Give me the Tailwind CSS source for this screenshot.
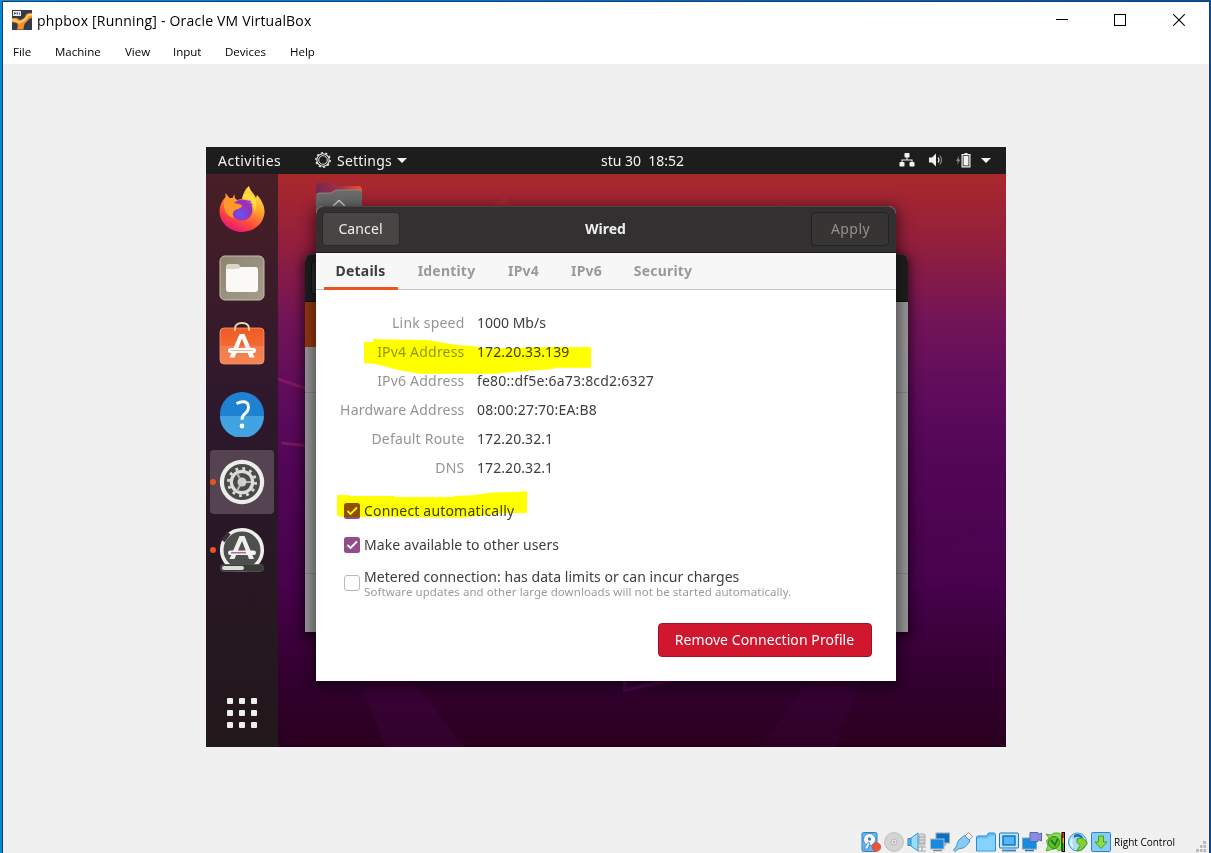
<!DOCTYPE html>
<html lang="en">
<head>
<meta charset="utf-8">
<title>phpbox [Running] - Oracle VM VirtualBox</title>
<script src="https://cdn.jsdelivr.net/npm/@tailwindcss/browser@4"></script>
</head>
<body class="h-[853px] w-[1211px] overflow-hidden bg-linear-to-r from-[#0788d8] to-[#0350ae] pt-px pr-px pl-[2px] font-['Open_Sans','Noto_Sans',sans-serif] text-black">
<div class="flex h-[852px] flex-col border-x border-t border-[#173f62] bg-[#f0f0f0]">

  <!-- Title bar -->
  <header class="flex h-[36px] shrink-0 items-center bg-white pl-[9px]">
    <svg class="h-5 w-5" viewBox="0 0 20 20">
      <rect width="20" height="20" fill="#343b46"/>
      <path d="M0 8.500c3-.8 6-.5 7.500 1.500 3-.5 5.500-2 6-4.500.5-2 3-2.500 6.500-2.500v5c-3 .3-3.500 2-5 3.500-2.500 2-3 3-3.500 8H5c.5-3 1.500-4.500 0-6-1.500-1.200-3.500-1-5-1z" fill="#f2902c"/>
      <path d="M0 9.500c3-.8 5 0 6.500 2 3.500-1 6.500-2.500 8-5.500 1-1.800 3-2 5.500-2v1.500c-3 0-3.500 1-4.500 2.500-2 3-4.500 4-8 5.500C5 12 3 11 0 11z" fill="#ffca78"/>
      <path d="M1 1h8v5H1z" fill="#e9edf0"/><path d="M2.500 4.500V2.500L4 4V2.500M5.500 2.500v2M7.500 4.500v-2" fill="none" stroke="#333" stroke-width=".8"/>
    </svg>
    <h1 class="mt-px ml-[5px] w-[700px] text-[14px] leading-5 tracking-[0.2px]">phpbox [Running] - Oracle VM VirtualBox</h1>
    <div class="ml-auto flex items-center gap-[46px] pr-[24px]">
      <svg class="h-3 w-3" viewBox="0 0 12 12" shape-rendering="crispEdges"><path d="M0 5.500h12" stroke="#000"/></svg>
      <svg class="mr-px h-3 w-3" viewBox="0 0 12 12" shape-rendering="crispEdges"><rect x=".5" y=".5" width="11" height="11" fill="none" stroke="#000"/></svg>
      <svg class="h-3 w-3" viewBox="0 0 12 12"><path d="M.3.3l11.400 11.400M11.700.3L.3 11.700" stroke="#000" stroke-width="1.100"/></svg>
    </div>
  </header>

  <!-- Menu bar -->
  <nav class="flex h-[26px] shrink-0 items-center bg-white pt-[2px] pl-[10px] text-[11.500px] leading-4">
    <span class="w-[42px]">File</span>
    <span class="w-[70px]">Machine</span>
    <span class="w-[48px]">View</span>
    <span class="w-[52px]">Input</span>
    <span class="w-[65px]">Devices</span>
    <span>Help</span>
  </nav>

  <!-- Guest display -->
  <main class="flex flex-1 justify-center pt-[83px] font-['Noto_Sans','Open_Sans',sans-serif]">
    <div class="relative mr-px flex h-[600px] w-[800px] flex-col overflow-hidden bg-[#2c0025] text-[14px]">

      <!-- Top panel -->
      <div class="flex h-[27px] shrink-0 items-center bg-[#1d1d1d] text-[#f2f2f2]">
        <span class="ml-[12px] w-[97px] pl-[0.5px] tracking-[0.5px]">Activities</span>
        <svg class="mb-px h-4 w-4" viewBox="0 0 16 16" fill="none" stroke="#f0f0f0">
          <circle cx="8" cy="8" r="6.200" stroke-width="1.100"/><circle cx="8" cy="8" r="4.300" stroke-width=".9"/>
          <circle cx="8" cy="8" r="7.200" stroke-width="1.400" stroke-dasharray="2 2.524"/>
        </svg>
        <span class="ml-[6px] w-[60px] pl-[0.5px] tracking-[0.2px]">Settings</span>
        <svg class="h-[5px] w-[10px]" viewBox="0 0 10 5"><path d="M0 0h10L5 5z" fill="#f2f2f2"/></svg>
        <span class="mb-px ml-[194px] w-[90px] pl-[0.5px] whitespace-pre">stu 30  18:52</span>
        <div class="ml-auto flex items-center pr-[15px]">
          <svg class="mr-px mb-px h-[14px] w-[16px]" viewBox="0 0 16 14" fill="#f2f2f2"><rect x="5.500" width="5" height="4.500" rx=".8"/><rect x=".5" y="9" width="5" height="4.500" rx=".8"/><rect x="10.500" y="9" width="5" height="4.500" rx=".8"/><path d="M7.500 4h1v2.500h5V9h-1V7.500h-9V9h-1V6.500h5z"/></svg>
          <svg class="mb-px ml-[13px] h-[14px] w-[15px]" viewBox="0 0 15 14"><path d="M0 4.500h3L7 .5v13L3 9.500H0z" fill="#f2f2f2"/><path d="M9 4.500q2 2.500 0 5" fill="none" stroke="#f2f2f2" stroke-width="1.200"/><path d="M10.800 2.500q3.500 4.500 0 9" fill="none" stroke="#888" stroke-width="1.200"/></svg>
          <svg class="mb-px ml-[12px] h-[15px] w-[15px]" viewBox="0 0 15 15"><path d="M3 3L0 8h2l-1 4 3.500-5.500H2.500z" fill="#8a8a8a"/><path d="M8.500 0h3v1H14.500v13.500H5.500V1h3zM6.700 2.200v11h6.600v-11z" fill="#f2f2f2" fill-rule="evenodd"/><path d="M7.500 3h5v9.500h-5z" fill="#f2f2f2"/></svg>
          <svg class="ml-[10px] h-[5px] w-[10px]" viewBox="0 0 10 5"><path d="M0 0h10L5 5z" fill="#f2f2f2"/></svg>
        </div>
      </div>

      <!-- Desktop -->
      <div class="flex h-[573px]">
        <svg class="absolute top-[27px] left-0 h-[573px] w-[800px]" viewBox="0 0 800 573">
          <defs><linearGradient id="wall" x1="0" y1="0" x2="0" y2="1">
            <stop offset="0" stop-color="#aa282b"/><stop offset=".12" stop-color="#931f3d"/><stop offset=".26" stop-color="#711458"/><stop offset=".4" stop-color="#5d0b5b"/><stop offset=".5" stop-color="#530657"/><stop offset=".72" stop-color="#46024a"/><stop offset=".88" stop-color="#330030"/><stop offset="1" stop-color="#2a001f"/>
          </linearGradient></defs>
          <rect width="800" height="573" fill="url(#wall)"/>
          <path d="M285 32l14-9 8 9zM564 32l12-3 10 3z" fill="#c13035" opacity=".35"/>
          <path d="M35 193l70 23M75 269l30 3" fill="none" stroke="#9b2868" stroke-width="3" opacity=".5"/>
          <path d="M152 505l28 68h78l-52-68z" fill="#4b0650" opacity=".25"/>
          <path d="M419 505v11l60-13" fill="none" stroke="#59095a" stroke-width="4" opacity=".7"/>
          <path d="M605 505l-52 68h76l27-68z" fill="#5c0a62" opacity=".12"/>
          <path d="M690 420q20-30 45-45l65-30v60z" fill="#5c0a62" opacity=".12"/>
        </svg>

        <!-- Dock -->
        <aside class="relative flex w-[72px] flex-col bg-linear-to-b from-[#481f25] via-[#2e182c] via-40% to-[#22171b] pt-px">
          <div class="flex h-[68px] items-center justify-center">
            <svg class="h-[48px] w-[48px]" viewBox="0 0 48 48">
              <defs><linearGradient id="ff" x1=".8" y1="0" x2=".3" y2="1"><stop offset="0" stop-color="#fff44f"/><stop offset=".4" stop-color="#ffa630"/><stop offset=".7" stop-color="#ff5038"/><stop offset="1" stop-color="#e5127e"/></linearGradient>
              <radialGradient id="fg" cx=".45" cy=".7"><stop offset="0" stop-color="#6a52f4"/><stop offset="1" stop-color="#9930b8"/></radialGradient></defs>
              <path d="M31 1c1 5 5 7 7 12l1-3c5 5 8 12 7.500 18C45 40 35 47 24 47 11 47 1.500 37 1.500 26c0-5 2-10 6-14V8l4 5 3 0 2-4c0 3 0 5 3 6 2-1 4-1 5-1 0-5 3-10 6.500-13z" fill="url(#ff)"/>
              <circle cx="24" cy="25" r="10.500" fill="url(#fg)"/>
              <path d="M7 14c4-1 7 1 9 4 3 1 8 1 8 3-1 3-6 3-8 5-2 2-1 5 0 7-6-1-13-9-9-19z" fill="#ff9a2a"/>
              <path d="M24 14c6-1 13 3 12 13 4-5 4-15-6-19-4 1-6 3-6 6z" fill="#ffdf40"/>
              <path d="M27 15l7 1-2 1 3 3h-4z" fill="#a33ad0"/>
            </svg>
          </div>
          <div class="flex h-[68px] items-center justify-center">
            <svg class="mt-px h-[46px] w-[46px]" viewBox="0 0 46 46">
              <defs><linearGradient id="fl" x1="0" y1="0" x2="1" y2="1"><stop offset="0" stop-color="#8e8570"/><stop offset="1" stop-color="#a39d8b"/></linearGradient></defs>
              <rect x="1" y="1" width="44" height="44" rx="5" fill="url(#fl)" stroke="#c4beac" stroke-width="1"/>
              <path d="M7 12q0-3 3-3h8q2 0 3 2l2 3H7z" fill="#d9d5ca"/>
              <path d="M7 14h10q3 0 5-2h14q3 0 3 3v19q0 3-3 3H10q-3 0-3-3z" fill="#faf9f7"/>
            </svg>
          </div>
          <div class="flex h-[68px] items-center justify-center pb-[2px]">
            <svg class="h-[48px] w-[46px]" viewBox="0 0 46 48">
              <defs><linearGradient id="sw" x1="0" y1="0" x2="0" y2="1"><stop offset="0" stop-color="#f15a22"/><stop offset=".5" stop-color="#f26a35"/><stop offset=".5" stop-color="#f47d4d"/><stop offset="1" stop-color="#f58350"/></linearGradient></defs>
              <rect x="1" y="8" width="44" height="36" rx="4" fill="url(#sw)" stroke="#f99b73" stroke-width=".8"/>
              <path d="M16 11V9q0-6 7-6t7 6v2" fill="none" stroke="#f5d9a5" stroke-width="1.800"/>
              <path d="M20.500 14h5l10 23.500h-5L23 18.500l-7.500 19h-5z" fill="#fff"/>
              <rect x="9" y="28" width="28" height="5" rx="2.500" fill="#fff"/><path d="M12 30.500h22" stroke="#f7b295"/>
            </svg>
          </div>
          <div class="mt-px flex h-[68px] items-center justify-center">
            <svg class="h-[46px] w-[46px]" viewBox="0 0 46 46">
              <circle cx="23" cy="23" r="22" fill="#1e82d2"/><path d="M1 25a22 22 0 0 0 44 0z" fill="#41a3e2"/>
              <path d="M17.500 12.500q4-2 7-1.800 5 .3 5 5.500 0 3.500-3.500 6.500-3 2.500-3 6" fill="none" stroke="#fff" stroke-width="2.900"/>
              <circle cx="23" cy="35" r="2.400" fill="#fff"/>
            </svg>
          </div>
          <div class="relative flex h-[68px] items-center justify-center">
            <div class="flex h-[64px] w-[64px] items-center justify-center rounded-[4px] bg-[#554352]">
              <svg class="h-[46px] w-[46px]" viewBox="0 0 46 46">
                <circle cx="23" cy="23" r="22.200" fill="#ededeb"/><circle cx="23" cy="23" r="18" fill="#4b4b4a"/>
                <circle cx="23" cy="23" r="13.600" fill="none" stroke="#deddda" stroke-width="2.800" stroke-dasharray="2.800 4.320"/>
                <circle cx="23" cy="23" r="10.700" fill="none" stroke="#deddda" stroke-width="3.200"/>
                <path d="M23 23h9M23 23l-5 8.500M23 23l-5-8.500" stroke="#b5b5b2" stroke-width="2.200"/>
                <circle cx="23" cy="23" r="4.500" fill="#d0d0cd"/>
              </svg>
            </div>
            <span class="absolute top-[31px] left-[4px] h-[6px] w-[6px] rounded-full bg-[#e95420]"></span>
          </div>
          <div class="relative flex h-[68px] items-center justify-center">
            <svg class="h-[46px] w-[46px]" viewBox="0 0 46 46">
              <circle cx="23" cy="23" r="20.300" fill="#4f4f4f" stroke="#eeeeec" stroke-width="3.600"/>
              <path d="M4 14l6-8" stroke="#3a3038" stroke-width="4"/>
              <path d="M20.500 9h5l9.500 23h-5L23 14l-7.500 18h-5z" fill="#efefee"/>
              <rect x="9" y="23.500" width="28" height="4.600" rx="2.300" fill="#f5f5f5"/><path d="M12 25.800h15" stroke="#924d8b" stroke-width="1.200"/>
              <rect x="1.500" y="37.500" width="43" height="7" rx="3" fill="#3c3c3b" stroke="#555" stroke-width=".8"/>
              <rect x="3" y="39" width="22" height="4" rx="2" fill="#dcdcda"/>
            </svg>
            <span class="absolute top-[31px] left-[4px] h-[6px] w-[6px] rounded-full bg-[#e95420]"></span>
          </div>
          <div class="mt-auto flex h-[68px] items-center justify-center">
            <svg class="h-[30px] w-[30px]" viewBox="0 0 30 30" fill="#eeeeec">
              <rect width="6" height="6" rx="1"/><rect x="12" width="6" height="6" rx="1"/><rect x="24" width="6" height="6" rx="1"/>
              <rect y="12" width="6" height="6" rx="1"/><rect x="12" y="12" width="6" height="6" rx="1"/><rect x="24" y="12" width="6" height="6" rx="1"/>
              <rect y="24" width="6" height="6" rx="1"/><rect x="12" y="24" width="6" height="6" rx="1"/><rect x="24" y="24" width="6" height="6" rx="1"/>
            </svg>
          </div>
        </aside>
      </div>

      <!-- Home folder on the desktop -->
      <svg class="absolute top-[35px] left-[110px] h-[40px] w-[46px]" viewBox="0 0 46 40">
        <defs><linearGradient id="home"><stop offset="0" stop-color="#74264f"/><stop offset=".55" stop-color="#a5324a"/><stop offset="1" stop-color="#e9552a"/></linearGradient></defs>
        <path d="M0 5q0-4 4-4h13l4 3h21q4 0 4 4v20H0z" fill="url(#home)"/>
        <path d="M0 14q0-3 3-3h12l5-3h23q3 0 3 3v29H0z" fill="#6b6b6b"/><path d="M1 12.500q1-1.500 3-1.500h11l5-3h23q2 0 3 2" fill="none" stroke="#949494" stroke-width=".8"/>
        <path d="M17 24l6-5.500 6 5.500" fill="none" stroke="#ddd" stroke-width="1.300"/>
      </svg>

      <!-- Settings window behind the dialog -->
      <div class="absolute top-[107px] left-[99px] flex h-[378px] w-[603px] flex-col overflow-hidden rounded-t-[7px] bg-[#989898] shadow-[0_3px_12px_3px_rgba(0,0,0,0.5)]">
        <div class="flex h-[48px] shrink-0 items-center border-t border-b border-t-[#343434] border-b-[#111] bg-[#1f1e1f] pl-[6px]"><div class="h-[34px] w-[40px] rounded-[4px] border border-[#111] bg-[#2a2929]"></div></div>
        <div class="h-[45px] w-[200px] bg-[#943710]"></div>
        <div class="h-[46px] border-b border-[#858585]"></div>
        <div class="h-[181px] border-b border-[#858585]"></div>
      </div>

      <!-- Wired connection dialog -->
      <section class="absolute top-[59px] left-[110px] flex h-[475px] w-[580px] flex-col rounded-t-[8px] bg-white text-[#3d3d3d] shadow-[0_3px_14px_3px_rgba(0,0,0,0.5)]">
        <div class="flex h-[47px] shrink-0 items-center justify-between rounded-t-[8px] border-t border-b border-t-[#474646] border-b-[#1d1c1c] bg-[#323030] px-[6px] pb-[2px] text-[#eeeeec]">
          <button class="h-[34px] w-[78px] rounded-[4px] border border-[#2a2828] bg-[#484645] pb-px tracking-[0.1px]">Cancel</button>
          <h2 class="font-bold">Wired</h2>
          <button class="h-[34px] w-[78px] rounded-[4px] border border-[#232222] bg-[#373434] pb-px tracking-[0.4px] text-[#919190]">Apply</button>
        </div>
        <div class="flex h-[37px] shrink-0 gap-2 border-b border-[#c3c3c3] bg-[#f7f7f7] px-2 text-center leading-[36px] font-bold tracking-[0.2px] text-[#9a9a99]">
          <span class="h-[37px] w-[74px] border-b-3 border-[#e95420] text-[#3d3d3d]">Details</span>
          <span class="w-[82px]">Identity</span>
          <span class="w-[56px]">IPv4</span>
          <span class="w-[54px]">IPv6</span>
          <span class="w-[83px]">Security</span>
        </div>
        <dl class="grid grid-cols-[149px_1fr] gap-x-[12.500px] pt-[18px] leading-[29px] [&>dt]:text-right [&>dt]:tracking-[0.2px] [&>dt]:text-[#949493]">
          <dt>Link speed</dt><dd>1000 Mb/s</dd>
          <dt>IPv4 Address</dt><dd class="tracking-[0.08px]">172.20.33.139</dd>
          <dt>IPv6 Address</dt><dd class="tracking-[0.2px]">fe80::df5e:6a73:8cd2:6327</dd>
          <dt>Hardware Address</dt><dd class="tracking-[0.2px]">08:00:27:70:EA:B8</dd>
          <dt>Default Route</dt><dd class="tracking-[0.08px]">172.20.32.1</dd>
          <dt>DNS</dt><dd class="tracking-[0.08px]">172.20.32.1</dd>
        </dl>
        <div class="flex flex-col pt-[12px] pl-[28px]">
          <label class="flex h-[34px] items-center gap-[4.500px]"><svg class="h-4 w-4" viewBox="0 0 16 16"><rect width="16" height="16" rx="2.500" fill="#924d8b"/><path d="M3.500 8l3 3L13 4.500" fill="none" stroke="#fff" stroke-width="1.800"/></svg><span class="pb-[2px] tracking-[0.18px]">Connect automatically</span></label>
          <label class="flex h-[34px] items-center gap-[4.500px]"><svg class="h-4 w-4" viewBox="0 0 16 16"><rect width="16" height="16" rx="2.500" fill="#924d8b"/><path d="M3.500 8l3 3L13 4.500" fill="none" stroke="#fff" stroke-width="1.800"/></svg><span class="pb-[2px] tracking-[0.05px]">Make available to other users</span></label>
          <label class="flex h-[42px] items-center gap-[4.500px]"><span class="h-4 w-4 rounded-[3px] border border-[#b9b9b9] bg-white"></span><span class="flex flex-col pt-[2px]"><span class="leading-4 tracking-[0.05px]">Metered connection: has data limits or can incur charges</span><span class="text-[11.500px] leading-[14px] tracking-[0.07px] text-[#9a9a99]">Software updates and other large downloads will not be started automatically.</span></span></label>
        </div>
        <button class="mt-auto mr-6 mb-6 h-[34px] w-[214px] self-end rounded-[4px] border border-[#a01222] bg-[#d0172d] pb-[2px] tracking-[0.08px] text-white">Remove Connection Profile</button>
      </section>

      <!-- Marker strokes over the dialog -->
      <svg class="pointer-events-none absolute top-0 left-0 h-[600px] w-[800px] mix-blend-multiply" viewBox="0 0 800 600" fill="#ffff00">
        <path d="M158 195h9.300v-3l53.400 1 30 5 15 1 15 2.700 26.300-.7 30-1h48v20.700h-36l-2 1.300-43 3.300-16.700 1.400H214l-21.700-3.700-21.600-5.700-12.700-1.300z"/>
        <path d="M131 348h12v1h46v1h59v-1l17.700-.7 10-1.300 6.600-1 31-1.300 7.700-.7v22h-22l-28.300 3.300-15 1.400-73.700-.7h-46.300l-4.700-1.300z"/>
      </svg>
    </div>
  </main>

  <!-- Status bar -->
  <footer class="flex h-[21px] shrink-0 items-start justify-end">
    <div class="flex gap-[3px]">
      <svg class="h-5 w-5" viewBox="0 0 20 20"><rect x="1" y=".5" width="15" height="19" rx="1.500" fill="#69b5ef" stroke="#2a82c9"/><circle cx="8.500" cy="7.500" r="6" fill="#fff" stroke="#3c8fd1"/><circle cx="8.500" cy="7" r="1.800" fill="#3688c8"/><path d="M3 17l4-7 2 1-2 6z" fill="#dff0fc" stroke="#257bbc" stroke-width=".7"/><circle cx="15.500" cy="15" r="4.300" fill="#ef5431" stroke="#d94524" stroke-width=".7"/></svg>
      <svg class="h-5 w-5" viewBox="0 0 20 20"><circle cx="10" cy="10" r="9.400" fill="#d4d4d4" stroke="#bebebe"/><circle cx="10" cy="10" r="3" fill="#e2e2e2" stroke="#b8b8b8"/><circle cx="10" cy="10" r="1" fill="#aaa"/></svg>
      <svg class="h-5 w-5" viewBox="0 0 20 20"><rect x="12" y="2" width="6" height="11" rx="1" fill="#ddd" stroke="#aaa"/><path d="M12 5h6M12 8h6M12 11h6M10 15h9M15 15v4M11 19h8" stroke="#a0a0a0"/><path d="M1 6.500h3v7H1z" fill="#55baf2" stroke="#2787c9"/><path d="M4 6l7-5v18l-7-5z" fill="#9bdcfb" stroke="#3695d0"/></svg>
      <svg class="h-5 w-5" viewBox="0 0 20 20"><rect x="6" y="1" width="13.500" height="10" fill="#0f70c0" stroke="#9aa9b5"/><path d="M10 11h6v3h-6z" fill="#aaa"/><rect x=".5" y="7" width="13.500" height="10" fill="#168ade" stroke="#aac0cf"/><path d="M3 18.500h9" stroke="#888" stroke-width="1.500"/></svg>
      <svg class="h-5 w-5" viewBox="0 0 20 20"><path d="M11.500 4.500L15.500.5l4 4-4 4z" fill="#eee" stroke="#999"/><path d="M7 7l4.500-3.500L17 9l-3.500 4.500c-3 3.500-6 2.500-8.500 3.500L2 19.500 .5 18 3 15c1.500-2 1-5.500 4-8z" fill="#8acbf4" stroke="#3f91c8"/></svg>
      <svg class="h-5 w-5" viewBox="0 0 20 20"><path d="M.5 19V5l1-1h9l2-3h6l1 1.500V19z" fill="#60c0fb" stroke="#2d8bd0"/><path d="M1 6.500h10.500l2-2.500H19v14.500H1z" fill="#83d2ff"/></svg>
      <svg class="h-5 w-5" viewBox="0 0 20 20"><rect x=".5" y="1" width="19" height="15" rx="1" fill="#bde7ff" stroke="#1b75b6"/><rect x="4" y="4" width="12" height="9" fill="#50b7fb" stroke="#0866b0" stroke-width="1.300"/><path d="M3 18.500h14" stroke="#3d8cc0" stroke-width="2"/></svg>
      <svg class="h-5 w-5" viewBox="0 0 20 20"><rect x=".5" y="6" width="14" height="11" fill="#168ade" stroke="#7ca8c8"/><path d="M3 18.500h9" stroke="#2478af" stroke-width="1.500"/><path d="M8 .5h8v2l3.500-1.500v8L16 7.500v2H8z" fill="#8690df" stroke="#5c66b8"/></svg>
      <svg class="h-5 w-5" viewBox="0 0 20 20"><path d="M1 2l5 1 3-2 5 0 2.500 2v15l-3 1-2-2.500-5 1L1 19l2-5-1.500-5L4 6z" fill="#8bdc4e" stroke="#3c9a22" stroke-width=".8"/><ellipse cx="9" cy="10.500" rx="5.500" ry="6" fill="#5cbf2c" stroke="#2e8a1b"/><path d="M6 8l4 5 2.500-6" fill="none" stroke="#216e17" stroke-width="1.500"/><path d="M16.500 0H20v20h-3.500z" fill="#000"/><path d="M17.500 1H19v5h-1.500z" fill="#e83020"/><path d="M17.500 6H19v5h-1.500z" fill="#f0c020"/><path d="M17.500 11H19v8h-1.500z" fill="#39b51f"/></svg>
      <svg class="h-5 w-5" viewBox="0 0 20 20"><circle cx="9.500" cy="10" r="9" fill="#a9dcfa" stroke="#3b9bd8"/><path d="M6 3q5-3 9 2l-1 2q-4-4-8-1z" fill="#166fae"/><path d="M4 7q-2 4 1 8" fill="none" stroke="#e4f5ff" stroke-width="2"/><path d="M9 6.500L14.500 6l5 5-6.500 7.500H9l3-5-3-3z" fill="#80d42f" stroke="#48991b"/></svg>
      <svg class="h-5 w-5" viewBox="0 0 20 20"><rect x=".5" y=".5" width="19" height="19" rx="1" fill="#85cdf6" stroke="#2e87c2"/><path d="M7.500 4h5v6H16l-6 6.500L4 10h3.500z" fill="#8edb42" stroke="#4a9e20"/></svg>
    </div>
    <span class="ml-[3px] w-[82px] text-[10px] leading-[21px] whitespace-nowrap">Right Control</span>
    <svg class="mt-[9px] mr-[3px] h-[11px] w-[10px]" viewBox="0 0 10 11" fill="#b8b8b8"><path d="M7 0h3v3H7zM4 4h2.500v3H4zM7.500 4H10v3H7.500zM0 8h3v3H0zM4 8h2.500v3H4zM7.500 8H10v3H7.500z"/></svg>
  </footer>
</div>
</body>
</html>
